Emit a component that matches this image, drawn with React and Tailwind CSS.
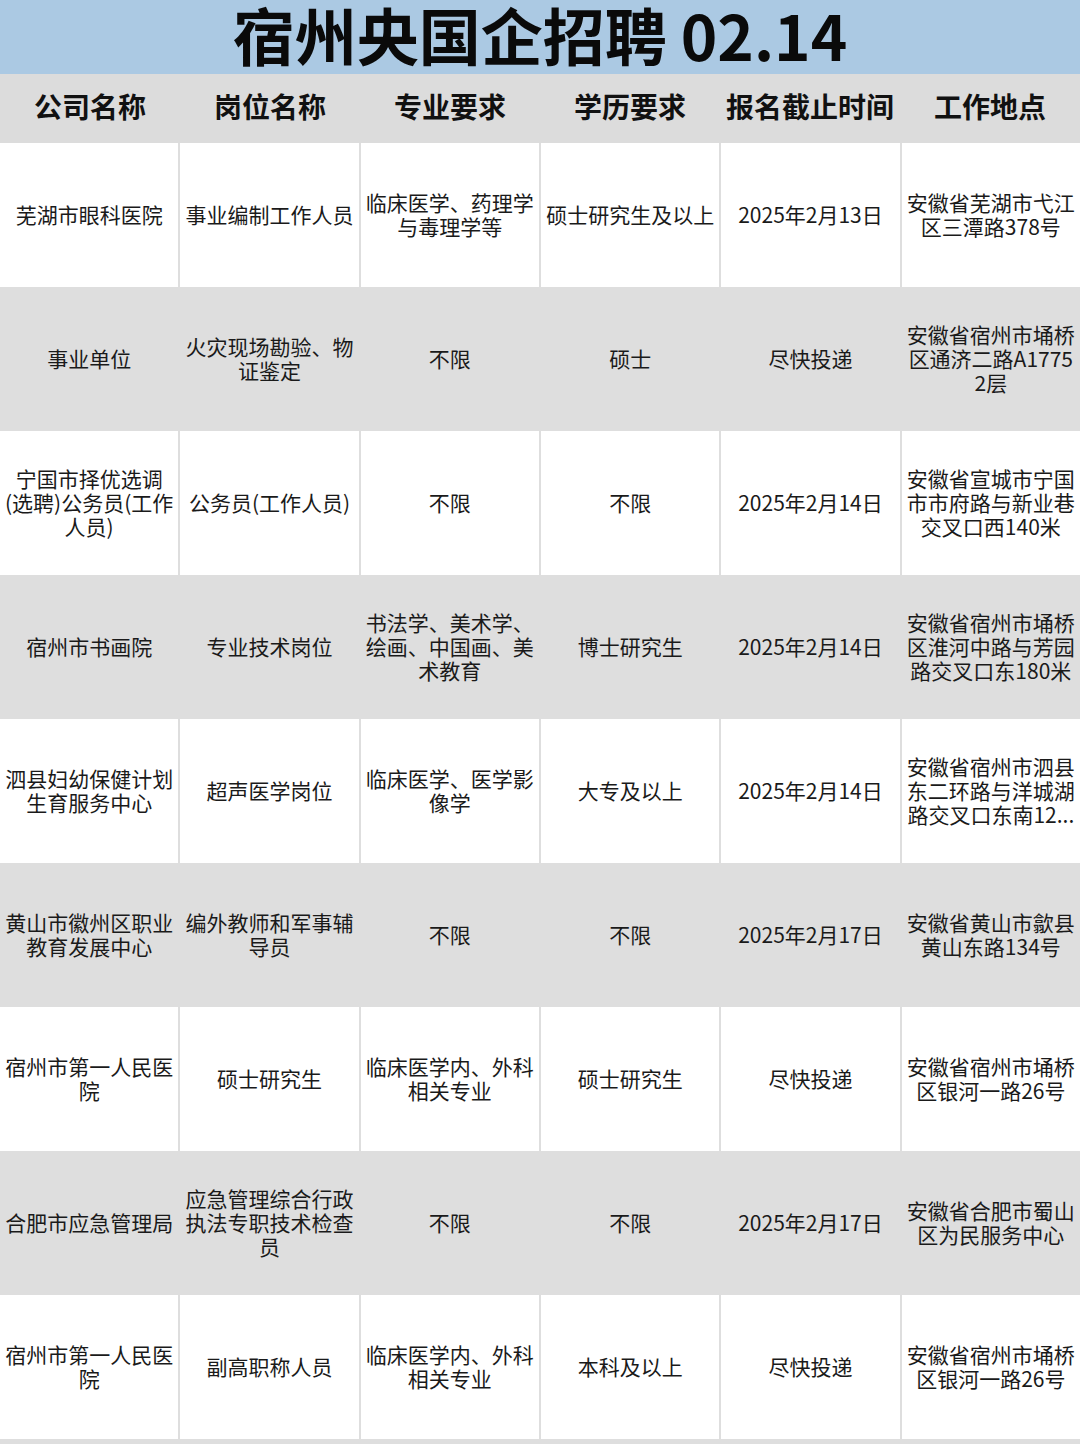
import React from 'react';

const headers = ['公司名称', '岗位名称', '专业要求', '学历要求', '报名截止时间', '工作地点'];

const rows = [
  ['芜湖市眼科医院', '事业编制工作人员', '临床医学、药理学与毒理学等', '硕士研究生及以上', '2025年2月13日', '安徽省芜湖市弋江区三潭路378号'],
  ['事业单位', '火灾现场勘验、物证鉴定', '不限', '硕士', '尽快投递', '安徽省宿州市埇桥区通济二路A1775 2层'],
  ['宁国市择优选调(选聘)公务员(工作人员)', '公务员(工作人员)', '不限', '不限', '2025年2月14日', '安徽省宣城市宁国市市府路与新业巷交叉口西140米'],
  ['宿州市书画院', '专业技术岗位', '书法学、美术学、绘画、中国画、美术教育', '博士研究生', '2025年2月14日', '安徽省宿州市埇桥区淮河中路与芳园路交叉口东180米'],
  ['泗县妇幼保健计划生育服务中心', '超声医学岗位', '临床医学、医学影像学', '大专及以上', '2025年2月14日', '安徽省宿州市泗县东二环路与洋城湖路交叉口东南12...'],
  ['黄山市徽州区职业教育发展中心', '编外教师和军事辅导员', '不限', '不限', '2025年2月17日', '安徽省黄山市歙县黄山东路134号'],
  ['宿州市第一人民医院', '硕士研究生', '临床医学内、外科相关专业', '硕士研究生', '尽快投递', '安徽省宿州市埇桥区银河一路26号'],
  ['合肥市应急管理局', '应急管理综合行政执法专职技术检查员', '不限', '不限', '2025年2月17日', '安徽省合肥市蜀山区为民服务中心'],
  ['宿州市第一人民医院', '副高职称人员', '临床医学内、外科相关专业', '本科及以上', '尽快投递', '安徽省宿州市埇桥区银河一路26号'],
];

const font = { fontFamily: '"Noto Sans CJK SC", "Noto Sans", sans-serif' };

export default function App() {
  return (
    <div className="w-[1080px] min-h-[1444px] bg-[#dedede] text-[#1a1a1a]" style={font}>
      <div className="h-[74px] bg-[#abc9e3] flex items-start justify-center">
        <h1 className="text-[62px] font-bold leading-[68px] text-[#0a0a0a]">宿州央国企招聘 02.14</h1>
      </div>
      <div className="h-[69px] bg-[#dcdcdc] grid grid-cols-6 items-center pb-[5px]">
        {headers.map((h) => (
          <div key={h} className="text-center text-[28px] font-bold text-[#111]">{h}</div>
        ))}
      </div>
      {rows.map((r, i) => (
        <div key={i} className="h-[144px] grid grid-cols-6 gap-x-[2px] bg-[#dedede]">
          {r.map((c, j) => (
            <div
              key={j}
              className={`flex items-center justify-center text-center text-[21px] leading-[24px] px-[4px] pb-[2px] ${i % 2 === 0 ? 'bg-white' : 'bg-[#dedede]'}`}
            >
              {c}
            </div>
          ))}
        </div>
      ))}
    </div>
  );
}
